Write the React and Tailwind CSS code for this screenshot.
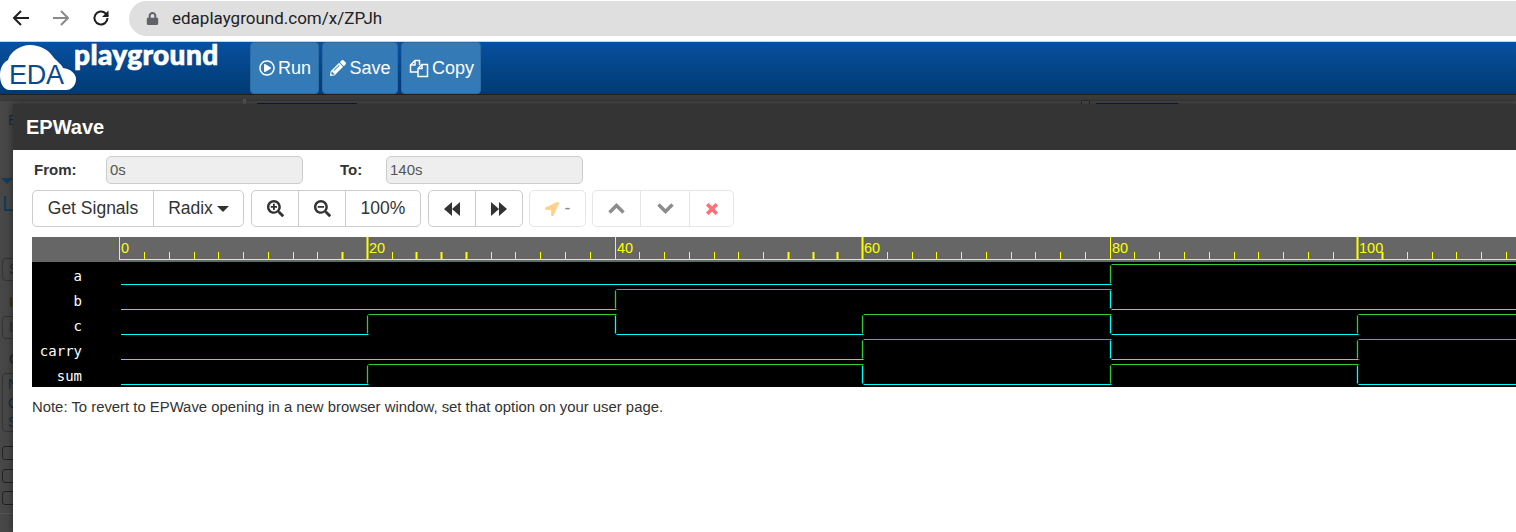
import { FaRegPlayCircle, FaPencilAlt, FaSearchPlus, FaSearchMinus, FaLocationArrow, FaLock } from "react-icons/fa"

const UNIT = 12.38
const X0 = 87.8
const xAt = (t) => X0 + t * UNIT
const px = (t) => Math.floor(xAt(t)) + 0.5

// ticks that come out thicker in the screenshot
const thickTicks = [18, 20, 24, 26, 28, 54, 56, 58, 60, 100, 102]

// transitions in time units, first segment is always low
const signals = [
  { name: "a", edges: [80] },
  { name: "b", edges: [40, 80] },
  { name: "c", edges: [20, 40, 60, 80, 100] },
  { name: "carry", edges: [60, 80, 100] },
  { name: "sum", edges: [20, 60, 80, 100] },
]

function Wave({ edges, row }) {
  const low = 22.5 + row * 25
  const high = 2.5 + row * 25
  const points = [0, ...edges, 160]
  return (
    <g fill="none" strokeWidth="1.2">
      {points.slice(0, -1).map((t, i) => {
        const isHigh = i % 2 === 1
        const y = isHigh ? high : low
        const start = t === 0 ? 89 : px(t) + 1
        return <line key={t} x1={start} x2={px(points[i + 1]) + 1} y1={y} y2={y} stroke={isHigh ? "#33cc33" : "#00ffff"} />
      })}
      {edges.map((t, i) => (
        <line key={t} x1={px(t)} x2={px(t)} y1={high + 1} y2={low - 1} stroke={i % 2 === 0 ? "#33cc33" : "#00ffff"} strokeWidth="1.3" />
      ))}
    </g>
  )
}

function Ruler() {
  const ticks = []
  for (let t = 0; t <= 118; t += 2) ticks.push(t)
  return (
    <svg width="1484" height="25" className="absolute left-0 top-0">
      <line x1="87" x2="1484" y1="22.5" y2="22.5" stroke="#ffff00" strokeWidth="1" />
      {ticks.map((t) => (
        <line key={t} x1={px(t)} x2={px(t)} y1={t % 20 === 0 ? 0 : 15} y2={23} stroke="#ffff00" strokeWidth={thickTicks.includes(t) ? 2 : 1} />
      ))}
    </svg>
  )
}

function Btn({ className = "", children }) {
  return <div className={`flex h-full items-center justify-center border-l first:border-l-0 ${className}`}>{children}</div>
}

function Group({ faded, className = "", children }) {
  return <div className={`flex h-[37px] items-stretch rounded-[5px] border bg-white ${faded ? "border-[#e6e6e6]" : "border-[#cccccc]"} ${className}`}>{children}</div>
}

function HeaderBtn({ icon, label, w }) {
  return (
    <div className={`flex h-[52px] items-center justify-center gap-[3px] rounded-[4px] border border-[#2e6da4] bg-[#337ab7] pl-px text-[18px] text-white ${w}`}>
      {icon}
      {label}
    </div>
  )
}

function FilesIcon() {
  return (
    <svg width="20" height="19" viewBox="0 0 20 19" fill="none" stroke="#ffffff" strokeWidth="1.5">
      <path d="M9 13H1.5V6L6 1.5h4.5V6" />
      <path d="M6 1.5V6H1.5" />
      <path d="M9 17.5V9.5L13 5.5h5.5v12z" />
      <path d="M13 5.5v4H9" />
    </svg>
  )
}

export default function App() {
  return (
    <div className="relative flex h-[532px] w-[1516px] flex-col overflow-hidden bg-white font-['Liberation_Sans',Arial,sans-serif]">
      {/* browser bar */}
      <div className="flex h-[42px] shrink-0 items-start border-b border-[#d0d0d0] bg-white">
        <div className="flex h-[36px] items-center gap-[22px] pl-[12px]">
          <svg width="18" height="18" viewBox="0 0 18 18" fill="none" stroke="#1f1f1f" strokeWidth="2"><path d="M17 9H2M9 2 2 9l7 7" /></svg>
          <svg width="18" height="18" viewBox="0 0 18 18" fill="none" stroke="#8a8a8a" strokeWidth="2"><path d="M1 9h15M9 2l7 7-7 7" /></svg>
          <svg width="18" height="18" viewBox="0 0 18 18" fill="none" stroke="#1f1f1f" strokeWidth="2"><path d="M15.5 9a6.5 6.5 0 1 1-2-4.7L16 7" /><path d="M16.5 1.5v6.5h-6.5" fill="#1f1f1f" stroke="none" /></svg>
        </div>
        <div className="ml-[19px] mt-px flex h-[35px] flex-1 items-center rounded-l-full bg-[#dfdfdf] pl-[17px] text-[17px] text-[#202124]">
          <FaLock className="mr-[13px] size-[13px] text-[#5f6368]" />
          <span className="font-['Roboto',sans-serif]">edaplayground.com/x/ZPJh</span>
        </div>
      </div>

      {/* site header */}
      <div className="flex h-[53px] shrink-0 items-start border-b border-[#222222] bg-gradient-to-b from-[#0850a0] to-[#013a72]">
        <div className="relative h-[50px] w-[250px] shrink-0">
          <svg width="78" height="50" viewBox="0 0 78 50" className="absolute left-0 top-0" fill="#ffffff">
            <path d="M10 48C3 48 0 41 0 33C0 25 4 20 8 18C10 10 20 3 30 3C40 3 49 8 54 16C58 20 62 23 63 26C70 27 76 31 76 37C76 43 72 48 66 48Z" />
          </svg>
          <span className="absolute left-[9px] top-[19px] text-[27px] leading-[28px] tracking-[-0.3px] text-[#0a4a8e]">EDA</span>
          <span className="absolute left-[74px] top-[-2px] font-['Lato',sans-serif] text-[28px] font-black leading-[28px] tracking-[0.4px] text-white [-webkit-text-stroke:0.7px_#ffffff]">playground</span>
        </div>
        <div className="flex gap-[3px]">
          <HeaderBtn w="w-[69px]" label="Run" icon={<FaRegPlayCircle className="size-[16px]" />} />
          <HeaderBtn w="w-[76px]" label="Save" icon={<FaPencilAlt className="size-[16px]" />} />
          <HeaderBtn w="w-[80px]" label="Copy" icon={<FilesIcon />} />
        </div>
      </div>

      {/* dimmed page behind the modal */}
      <div className="relative flex-1 bg-[#474747] text-[#2a2a2a]">
        <div className="absolute inset-x-0 top-0 h-[6px] border-b border-[#383838] bg-[#3c3c3c]" />
        <div className="absolute left-[243px] top-[4px] h-[5px] w-[3px] bg-[#555555]" />
        <div className="absolute left-[257px] top-[8px] h-px w-[100px] bg-[#0b1d4a]" />
        <div className="absolute left-[1081px] top-[5px] h-[5px] w-[9px] rounded-[1px] border border-[#2c2c2c] bg-[#4c4c4c]" />
        <div className="absolute left-[1096px] top-[8px] h-px w-[82px] bg-[#0b1d4a]" />
        <div className="absolute left-[8px] top-[15px] text-[14px] text-[#1d2a44]">E</div>
        <div className="absolute left-[1px] top-[83px] h-0 w-0 border-x-[6px] border-t-[6px] border-x-transparent border-t-[#123c5e]" />
        <div className="absolute left-[2px] top-[97px] text-[22px] leading-[24px] text-[#12395a]">L</div>
        <div className="absolute left-[2px] top-[163px] flex h-[23px] w-[20px] items-center rounded-[4px] border border-[#333333] pl-[6px] text-[14px]">S</div>
        <div className="absolute left-[9px] top-[197px] text-[14px] text-[#2e2410]">I</div>
        <div className="absolute left-[2px] top-[221px] flex h-[23px] w-[20px] items-center rounded-[4px] border border-[#333333] pl-[6px] text-[14px]">I</div>
        <div className="absolute left-[9px] top-[254px] text-[14px] font-bold">C</div>
        <div className="absolute left-[2px] top-[278px] flex h-[59px] w-[20px] flex-col rounded-[4px] border border-[#333333] pl-[5px] pt-[1px] text-[14px] leading-[19px] text-[#1f2740]">
          <span>N</span>
          <span>C</span>
          <span>S</span>
        </div>
        <div className="absolute left-[2px] top-[351px] h-[14px] w-[20px] rounded-[3px] border border-[#222222]" />
        <div className="absolute left-[2px] top-[374px] h-[14px] w-[20px] rounded-[3px] border border-[#222222]" />
        <div className="absolute left-[2px] top-[396px] h-[14px] w-[20px] rounded-[3px] border border-[#222222]" />
        <div className="absolute inset-x-0 top-[418px] h-px bg-[#555555]" />

        {/* EPWave modal */}
        <div className="absolute bottom-0 left-[13px] right-0 top-[9px] flex flex-col bg-white shadow-[0_0_8px_rgba(0,0,0,0.45)]">
          <div className="flex h-[46px] shrink-0 items-center bg-[#343434] pl-[13px] text-[20px] font-bold text-white">EPWave</div>
          <div className="flex flex-col pl-[19px] pt-[6px]">
            <div className="flex h-[28px] items-center text-[15px]">
              <b className="w-[74px] pl-[2px] text-[#333333]">From:</b>
              <div className="flex h-[28px] w-[197px] items-center rounded-[5px] border border-[#cccccc] bg-[#eeeeee] pl-[3px] text-[#555555]">0s</div>
              <b className="ml-[37px] w-[46px] text-[#333333]">To:</b>
              <div className="flex h-[28px] w-[197px] items-center rounded-[5px] border border-[#cccccc] bg-[#eeeeee] pl-[3px] text-[#555555]">140s</div>
            </div>
            <div className="mt-[6px] flex text-[17.5px] text-[#333333]">
              <Group>
                <Btn className="w-[120px] border-[#cccccc]">Get Signals</Btn>
                <Btn className="w-[90px] gap-[4px] border-[#cccccc]">
                  Radix
                  <span className="h-0 w-0 border-x-[6px] border-t-[6px] border-x-transparent border-t-[#333333]" />
                </Btn>
              </Group>
              <Group className="ml-[7px]">
                <Btn className="w-[46px] border-[#cccccc]"><FaSearchPlus className="size-[17px]" /></Btn>
                <Btn className="w-[47px] border-[#cccccc]"><FaSearchMinus className="size-[17px]" /></Btn>
                <Btn className="w-[75px] border-[#cccccc]">100%</Btn>
              </Group>
              <Group className="ml-[7px]">
                <Btn className="w-[46px] border-[#cccccc]">
                  <svg width="16" height="14" viewBox="0 0 16 14" fill="#333333"><path d="M8 0v14L0 7zM16 0v14L8 7z" /></svg>
                </Btn>
                <Btn className="w-[47px] border-[#cccccc]">
                  <svg width="16" height="14" viewBox="0 0 16 14" fill="#333333"><path d="M0 0v14l8-7zM8 0v14l8-7z" /></svg>
                </Btn>
              </Group>
              <Group faded className="ml-[6px]">
                <Btn className="w-[55px] gap-[6px] border-[#e6e6e6] text-[#888888]"><FaLocationArrow className="size-[14px] text-[#fdd28c]" /> -</Btn>
              </Group>
              <Group faded className="ml-[6px]">
                <Btn className="w-[47px] border-[#e6e6e6]">
                  <svg width="17" height="11" viewBox="0 0 17 11" fill="none" stroke="#8c8c8c" strokeWidth="3.4"><path d="M1.5 9.5l7-7 7 7" /></svg>
                </Btn>
                <Btn className="w-[49px] border-[#e6e6e6]">
                  <svg width="17" height="11" viewBox="0 0 17 11" fill="none" stroke="#8c8c8c" strokeWidth="3.4"><path d="M1.5 1.5l7 7 7-7" /></svg>
                </Btn>
                <Btn className="w-[44px] border-[#e6e6e6]">
                  <svg width="12" height="12" viewBox="0 0 12 12" fill="none" stroke="#ff6f75" strokeWidth="3.6"><path d="M1.2 1.2l9.6 9.6M10.8 1.2l-9.6 9.6" /></svg>
                </Btn>
              </Group>
            </div>

            {/* timeline ruler */}
            <div className="relative mt-[10px] h-[25px] bg-[#666666]">
              <Ruler />
              {[0, 20, 40, 60, 80, 100].map((t) => (
                <span key={t} className="absolute top-[3px] text-[14.5px] leading-[16px] text-[#ffff00]" style={{ left: px(t) + 1.5 }}>{t}</span>
              ))}
            </div>

            {/* signal rows */}
            <div className="flex h-[125px] bg-black">
              <div className="flex w-[50px] shrink-0 flex-col pt-[2px] font-['DejaVu_Sans_Mono',monospace] text-[14px] text-white">
                {signals.map((s) => (
                  <div key={s.name} className="flex h-[25px] shrink-0 items-center justify-end">{s.name}</div>
                ))}
              </div>
              <svg width="1434" height="125" viewBox="50 0 1434 125" className="shrink-0">
                {signals.map((s, i) => <Wave key={s.name} edges={s.edges} row={i} />)}
              </svg>
            </div>

            <p className="mt-[10px] text-[14.87px] leading-[20px] text-[#333333]">Note: To revert to EPWave opening in a new browser window, set that option on your user page.</p>
          </div>
        </div>
      </div>
    </div>
  )
}
